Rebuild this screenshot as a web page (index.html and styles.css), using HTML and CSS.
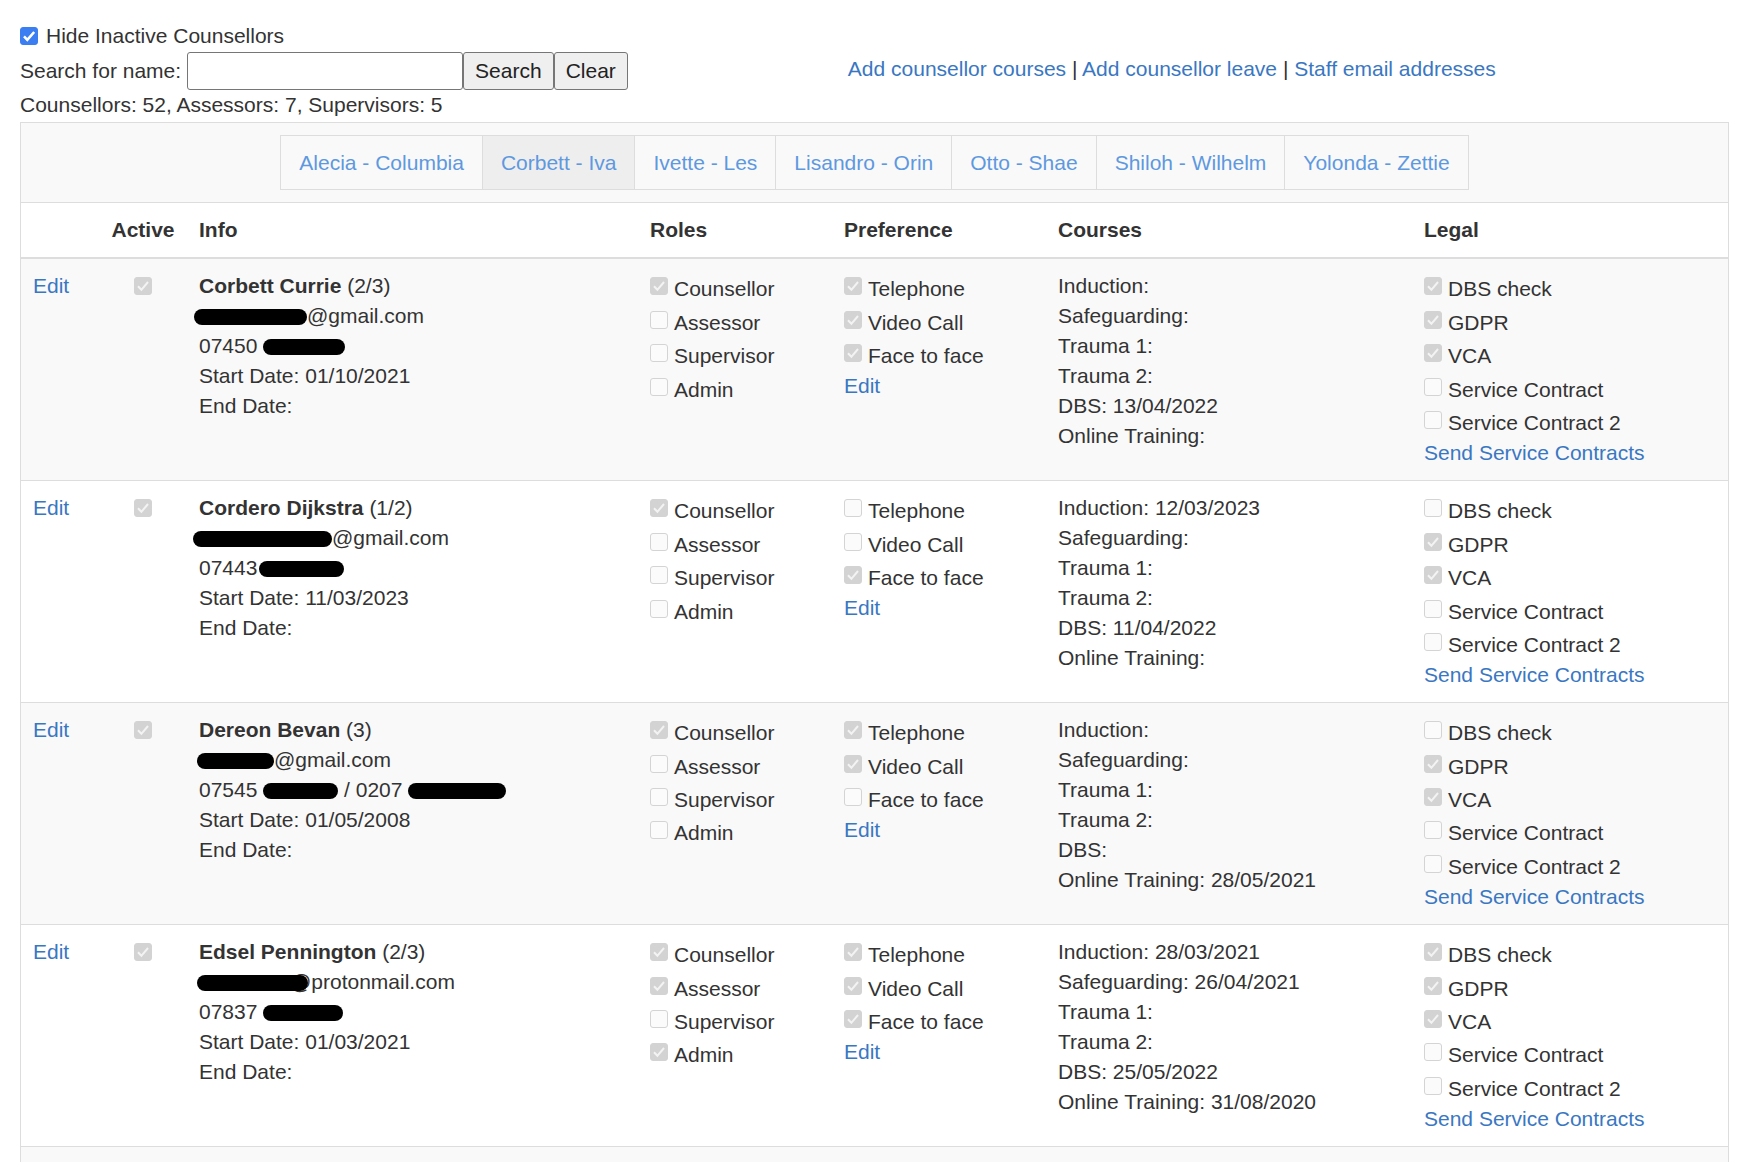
FILE: index.html
```html
<!DOCTYPE html>
<html lang="en">
<head>
<meta charset="utf-8">
<title>Counsellors</title>
<link rel="stylesheet" href="styles.css">
</head>
<body>
<div class="page">
  <label class="hide-row"><span class="cb blue"></span><span>Hide Inactive Counsellors</span></label>
  <div class="search-row">
    <form class="search">
      <span>Search for name:</span>
      <input class="search-input" type="text">
      <button type="button" class="btn">Search</button><button type="button" class="btn">Clear</button>
    </form>
    <div class="toplinks"><a href="#">Add counsellor courses</a> | <a href="#">Add counsellor leave</a> | <a href="#">Staff email addresses</a></div>
  </div>
  <div class="counts">Counsellors: 52, Assessors: 7, Supervisors: 5</div>

  <table class="grid">
    <colgroup>
      <col class="c-edit"><col class="c-act"><col class="c-info"><col class="c-roles"><col class="c-pref"><col class="c-courses"><col class="c-legal">
    </colgroup>
    <thead>
      <tr class="pager-row">
        <td colspan="7">
          <ul class="pager">
            <li><a href="#">Alecia - Columbia</a></li>
            <li class="active"><a href="#">Corbett - Iva</a></li>
            <li><a href="#">Ivette - Les</a></li>
            <li><a href="#">Lisandro - Orin</a></li>
            <li><a href="#">Otto - Shae</a></li>
            <li><a href="#">Shiloh - Wilhelm</a></li>
            <li><a href="#">Yolonda - Zettie</a></li>
          </ul>
        </td>
      </tr>
      <tr class="head-row">
        <th></th><th class="center">Active</th><th>Info</th><th>Roles</th><th>Preference</th><th>Courses</th><th>Legal</th>
      </tr>
    </thead>
    <tbody>
      <tr class="odd">
        <td><a href="#">Edit</a></td>
        <td class="act"><span class="cb on"></span></td>
        <td>
          <div><b>Corbett Currie</b> (2/3)</div>
          <div><span class="redact w113 ml5"></span>@gmail.com</div>
          <div>07450 <span class="redact w82"></span></div>
          <div>Start Date: 01/10/2021</div>
          <div>End Date:</div>
        </td>
        <td>
          <div class="ck"><span class="cb on"></span><span>Counsellor</span></div>
          <div class="ck"><span class="cb"></span><span>Assessor</span></div>
          <div class="ck"><span class="cb"></span><span>Supervisor</span></div>
          <div class="ck"><span class="cb"></span><span>Admin</span></div>
        </td>
        <td>
          <div class="ck"><span class="cb on"></span><span>Telephone</span></div>
          <div class="ck"><span class="cb on"></span><span>Video Call</span></div>
          <div class="ck"><span class="cb on"></span><span>Face to face</span></div>
          <div><a href="#">Edit</a></div>
        </td>
        <td>
          <div>Induction:</div>
          <div>Safeguarding:</div>
          <div>Trauma 1:</div>
          <div>Trauma 2:</div>
          <div>DBS: 13/04/2022</div>
          <div>Online Training:</div>
        </td>
        <td>
          <div class="ck"><span class="cb on"></span><span>DBS check</span></div>
          <div class="ck"><span class="cb on"></span><span>GDPR</span></div>
          <div class="ck"><span class="cb on"></span><span>VCA</span></div>
          <div class="ck"><span class="cb"></span><span>Service Contract</span></div>
          <div class="ck"><span class="cb"></span><span>Service Contract 2</span></div>
          <div><a href="#">Send Service Contracts</a></div>
        </td>
      </tr>

      <tr>
        <td><a href="#">Edit</a></td>
        <td class="act"><span class="cb on"></span></td>
        <td>
          <div><b>Cordero Dijkstra</b> (1/2)</div>
          <div><span class="redact w139 ml6"></span>@gmail.com</div>
          <div>07443 <span class="redact w85 ml4"></span></div>
          <div>Start Date: 11/03/2023</div>
          <div>End Date:</div>
        </td>
        <td>
          <div class="ck"><span class="cb on"></span><span>Counsellor</span></div>
          <div class="ck"><span class="cb"></span><span>Assessor</span></div>
          <div class="ck"><span class="cb"></span><span>Supervisor</span></div>
          <div class="ck"><span class="cb"></span><span>Admin</span></div>
        </td>
        <td>
          <div class="ck"><span class="cb"></span><span>Telephone</span></div>
          <div class="ck"><span class="cb"></span><span>Video Call</span></div>
          <div class="ck"><span class="cb on"></span><span>Face to face</span></div>
          <div><a href="#">Edit</a></div>
        </td>
        <td>
          <div>Induction: 12/03/2023</div>
          <div>Safeguarding:</div>
          <div>Trauma 1:</div>
          <div>Trauma 2:</div>
          <div>DBS: 11/04/2022</div>
          <div>Online Training:</div>
        </td>
        <td>
          <div class="ck"><span class="cb"></span><span>DBS check</span></div>
          <div class="ck"><span class="cb on"></span><span>GDPR</span></div>
          <div class="ck"><span class="cb on"></span><span>VCA</span></div>
          <div class="ck"><span class="cb"></span><span>Service Contract</span></div>
          <div class="ck"><span class="cb"></span><span>Service Contract 2</span></div>
          <div><a href="#">Send Service Contracts</a></div>
        </td>
      </tr>

      <tr class="odd">
        <td><a href="#">Edit</a></td>
        <td class="act"><span class="cb on"></span></td>
        <td>
          <div><b>Dereon Bevan</b> (3)</div>
          <div><span class="redact w77 ml2"></span>@gmail.com</div>
          <div>07545 <span class="redact w75"></span> / 0207 <span class="redact w98"></span></div>
          <div>Start Date: 01/05/2008</div>
          <div>End Date:</div>
        </td>
        <td>
          <div class="ck"><span class="cb on"></span><span>Counsellor</span></div>
          <div class="ck"><span class="cb"></span><span>Assessor</span></div>
          <div class="ck"><span class="cb"></span><span>Supervisor</span></div>
          <div class="ck"><span class="cb"></span><span>Admin</span></div>
        </td>
        <td>
          <div class="ck"><span class="cb on"></span><span>Telephone</span></div>
          <div class="ck"><span class="cb on"></span><span>Video Call</span></div>
          <div class="ck"><span class="cb"></span><span>Face to face</span></div>
          <div><a href="#">Edit</a></div>
        </td>
        <td>
          <div>Induction:</div>
          <div>Safeguarding:</div>
          <div>Trauma 1:</div>
          <div>Trauma 2:</div>
          <div>DBS:</div>
          <div>Online Training: 28/05/2021</div>
        </td>
        <td>
          <div class="ck"><span class="cb"></span><span>DBS check</span></div>
          <div class="ck"><span class="cb on"></span><span>GDPR</span></div>
          <div class="ck"><span class="cb on"></span><span>VCA</span></div>
          <div class="ck"><span class="cb"></span><span>Service Contract</span></div>
          <div class="ck"><span class="cb"></span><span>Service Contract 2</span></div>
          <div><a href="#">Send Service Contracts</a></div>
        </td>
      </tr>

      <tr>
        <td><a href="#">Edit</a></td>
        <td class="act"><span class="cb on"></span></td>
        <td>
          <div><b>Edsel Pennington</b> (2/3)</div>
          <div><span class="redact w111 ml2 over"></span>@protonmail.com</div>
          <div>07837 <span class="redact w80"></span></div>
          <div>Start Date: 01/03/2021</div>
          <div>End Date:</div>
        </td>
        <td>
          <div class="ck"><span class="cb on"></span><span>Counsellor</span></div>
          <div class="ck"><span class="cb on"></span><span>Assessor</span></div>
          <div class="ck"><span class="cb"></span><span>Supervisor</span></div>
          <div class="ck"><span class="cb on"></span><span>Admin</span></div>
        </td>
        <td>
          <div class="ck"><span class="cb on"></span><span>Telephone</span></div>
          <div class="ck"><span class="cb on"></span><span>Video Call</span></div>
          <div class="ck"><span class="cb on"></span><span>Face to face</span></div>
          <div><a href="#">Edit</a></div>
        </td>
        <td>
          <div>Induction: 28/03/2021</div>
          <div>Safeguarding: 26/04/2021</div>
          <div>Trauma 1:</div>
          <div>Trauma 2:</div>
          <div>DBS: 25/05/2022</div>
          <div>Online Training: 31/08/2020</div>
        </td>
        <td>
          <div class="ck"><span class="cb on"></span><span>DBS check</span></div>
          <div class="ck"><span class="cb on"></span><span>GDPR</span></div>
          <div class="ck"><span class="cb on"></span><span>VCA</span></div>
          <div class="ck"><span class="cb"></span><span>Service Contract</span></div>
          <div class="ck"><span class="cb"></span><span>Service Contract 2</span></div>
          <div><a href="#">Send Service Contracts</a></div>
        </td>
      </tr>

      <tr class="odd tail">
        <td></td><td></td><td></td><td></td><td></td><td></td><td></td>
      </tr>
    </tbody>
  </table>
</div>
</body>
</html>
```

FILE: styles.css
```css
html, body {
  margin: 0;
  padding: 0;
  background: #fff;
}

body {
  font-family: "Liberation Sans", Arial, Helvetica, sans-serif;
  font-size: 21px;
  line-height: 30px;
  color: #333;
}

a {
  color: #3a77c2;
  text-decoration: none;
}

.page {
  padding: 21px 13px 0 20px;
}

/* top controls */
.hide-row {
  display: flex;
  align-items: center;
  gap: 8px;
  height: 30px;
}

.search-row {
  display: flex;
  align-items: flex-start;
  margin-top: 1px;
}

.search {
  display: flex;
  align-items: center;
  height: 38px;
  margin: 0;
}

.search-input {
  box-sizing: border-box;
  width: 276px;
  height: 38px;
  margin: 0 0 0 6px;
  padding: 1px 4px;
  border: 1px solid #767676;
  border-radius: 3px;
  background: #fff;
  font: inherit;
}

.btn {
  box-sizing: border-box;
  height: 38px;
  margin: 0;
  padding: 0 11px;
  border: 1px solid #767676;
  border-radius: 3px;
  background: #efefef;
  color: #222;
  font-family: "Liberation Sans", Arial, sans-serif;
  font-size: 21px;
  line-height: 36px;
}

.toplinks {
  margin-left: 220px;
  margin-top: 2px;
  line-height: 30px;
  white-space: nowrap;
}

.counts {
  height: 30px;
}

/* checkboxes */
.cb {
  box-sizing: border-box;
  display: inline-block;
  flex: none;
  width: 18px;
  height: 18px;
  border: 1px solid #d4d4d4;
  border-radius: 3px;
  background: #fbfbfb;
}

.cb.on {
  border-color: #d3d3d3;
  background: #d3d3d3 url("data:image/svg+xml,%3Csvg xmlns='http://www.w3.org/2000/svg' viewBox='0 0 16 16'%3E%3Cpath d='M3 8.2l3.4 3.6L13 4' fill='none' stroke='%23f3f3f3' stroke-width='2'/%3E%3C/svg%3E") center / 16px 16px no-repeat;
}

.cb.blue {
  border-color: #3b7ef2;
  background: #3b7ef2 url("data:image/svg+xml,%3Csvg xmlns='http://www.w3.org/2000/svg' viewBox='0 0 16 16'%3E%3Cpath d='M3 8.4l3.3 3.4L13.2 4' fill='none' stroke='%23ffffff' stroke-width='2.6'/%3E%3C/svg%3E") center / 16px 16px no-repeat;
}

/* table */
.grid {
  width: 1709px;
  margin-top: 2px;
  table-layout: fixed;
  border-collapse: separate;
  border-spacing: 0;
  border: 1px solid #ddd;
}

.c-edit { width: 78px; }
.c-act { width: 88px; }
.c-info { width: 451px; }
.c-roles { width: 194px; }
.c-pref { width: 214px; }
.c-courses { width: 366px; }
.c-legal { width: 316px; }

.grid td,
.grid th {
  padding: 12px;
  vertical-align: top;
  text-align: left;
  line-height: 30px;
}

.pager-row td {
  background: #f9f9f9;
  border-bottom: 1px solid #ddd;
  padding: 12px;
}

.pager {
  display: flex;
  justify-content: center;
  list-style: none;
  margin: 0;
  padding: 0;
}

.pager li a {
  display: block;
  padding: 12px 18px;
  line-height: 29px;
  border: 1px solid #ddd;
  margin-left: -1px;
  color: #5e98df;
}

.pager li:first-child a {
  margin-left: 0;
}

.pager li.active a {
  background: #eeeeee;
}

.head-row th {
  font-weight: bold;
  border-bottom: 2px solid #ddd;
  background: #fff;
}

.head-row th.center,
.act {
  text-align: center;
}

.grid tbody td {
  border-bottom: 1px solid #ddd;
}

.grid tbody tr.odd td {
  background: #f9f9f9;
}

.grid tbody tr.tail td {
  height: 60px;
}

.act .cb {
  display: block;
  margin: 6px auto 0;
}

.ck {
  display: flex;
  align-items: flex-start;
  gap: 6px;
  margin-top: 3.4px;
  line-height: 30px;
}

.ck .cb {
  margin-top: 3px;
}

b {
  font-weight: bold;
}

/* redactions */
.redact {
  display: inline-block;
  height: 16px;
  background: #000;
  border-radius: 8px;
  vertical-align: middle;
}

.redact.over {
  position: relative;
  z-index: 1;
  margin-right: -18px;
}

.w75 { width: 75px; }
.w77 { width: 77px; }
.w80 { width: 80px; }
.w82 { width: 82px; }
.w85 { width: 85px; }
.w98 { width: 98px; }
.w111 { width: 111px; }
.w113 { width: 113px; }
.w139 { width: 139px; }

.ml2 { margin-left: -2px; }
.ml4 { margin-left: -4px; }
.ml5 { margin-left: -5px; }
.ml6 { margin-left: -6px; }
```
